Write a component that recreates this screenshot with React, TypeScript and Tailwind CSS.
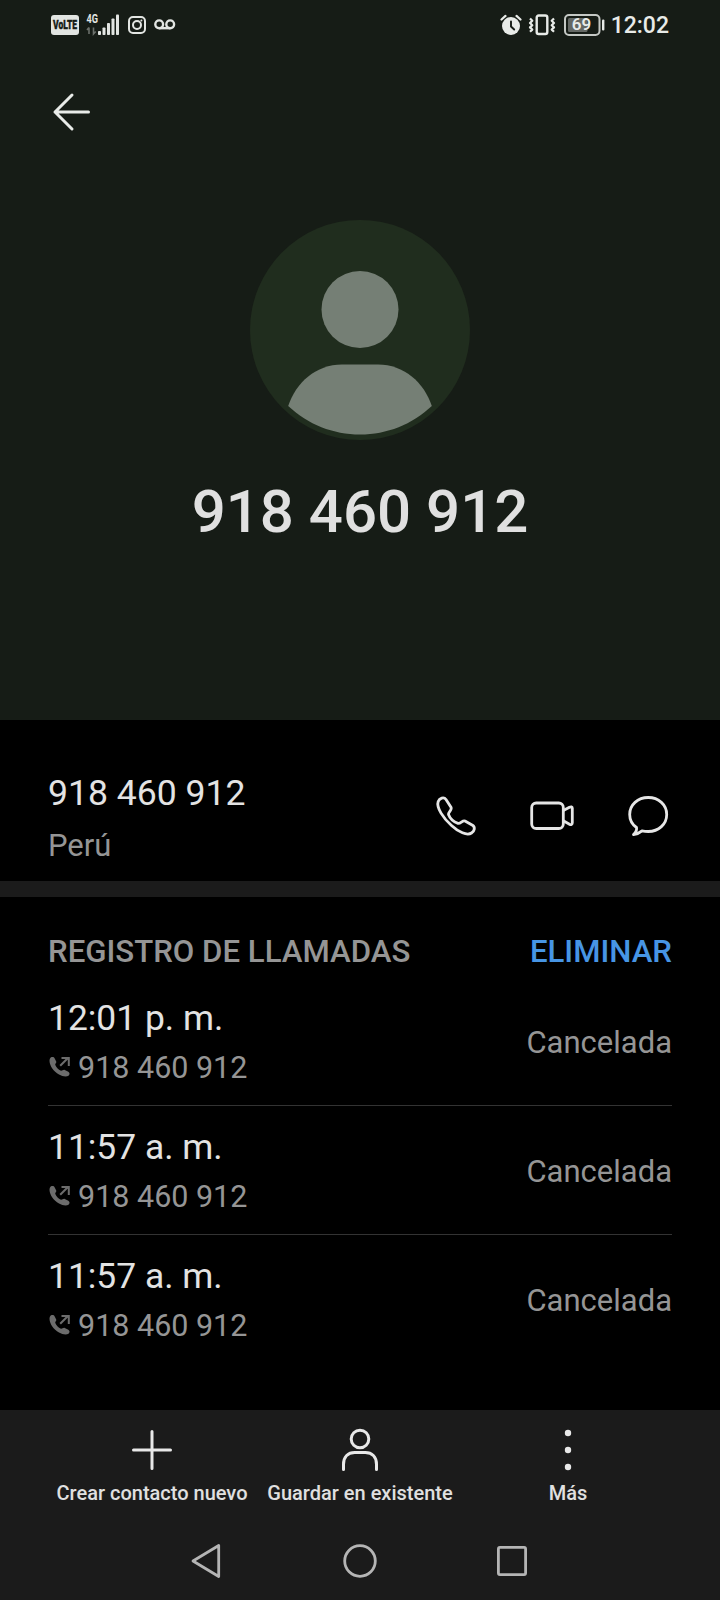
import type { ReactNode } from "react";

interface CallEntry {
  id: number;
  time: string;
  number: string;
  status: string;
}

const calls: CallEntry[] = [
  { id: 1, time: "12:01 p. m.", number: "918 460 912", status: "Cancelada" },
  { id: 2, time: "11:57 a. m.", number: "918 460 912", status: "Cancelada" },
  { id: 3, time: "11:57 a. m.", number: "918 460 912", status: "Cancelada" },
];

function SignalIcons() {
  return (
    <div className="flex items-center">
      <svg viewBox="0 0 28 20" className="h-5 w-7 overflow-visible" aria-label="VoLTE">
        <rect width="28" height="20" rx="3" fill="#e2e5e2" />
        <text x="2" y="14.4" textLength="24" lengthAdjust="spacingAndGlyphs" fontSize="12.5" fontWeight="900" fill="#161c16" stroke="#161c16" strokeWidth="0.4">
          VoLTE
        </text>
      </svg>
      <svg viewBox="0 0 34 24" className="ml-[7px] h-6 w-[34px] overflow-visible" fill="#e2e5e2">
        <text x="0.5" y="10.2" textLength="11.5" lengthAdjust="spacingAndGlyphs" fontSize="13" fontWeight="700">
          4G
        </text>
        <path d="M3 14.5v6.5M1 17l2-2.5M7.5 14.5v6.5l2.2-2.5" fill="none" stroke="#6b706b" strokeWidth="1.6" />
        <rect x="12" y="18" width="3" height="4" rx="0.8" />
        <rect x="16.5" y="14.5" width="3" height="7.5" rx="0.8" />
        <rect x="21" y="10" width="3" height="12" rx="0.8" />
        <rect x="25.5" y="5.5" width="3" height="16.5" rx="0.8" />
        <rect x="30" y="1.5" width="3" height="20.5" rx="0.8" />
      </svg>
      <svg viewBox="0 0 18 18" className="ml-2 size-[18px]" fill="none" stroke="#e2e5e2" strokeWidth="2">
        <rect x="1" y="1" width="16" height="16" rx="4" />
        <circle cx="9" cy="9" r="4" />
        <circle cx="13.4" cy="4.6" r="1" fill="#e2e5e2" stroke="none" />
      </svg>
      <svg viewBox="0 0 22 12" className="ml-[8px] h-3 w-[22px]" fill="none" stroke="#e2e5e2" strokeWidth="2.4">
        <circle cx="5.2" cy="5.3" r="3.9" />
        <circle cx="16.2" cy="5.3" r="3.9" />
        <path d="M5.2 9.2h11" />
      </svg>
    </div>
  );
}

function StatusBar() {
  return (
    <div className="flex h-[49px] items-center justify-between pr-[51px] pl-[51px] text-[#e8ebe8]">
      <SignalIcons />
      <div className="flex items-center">
        <svg viewBox="0 0 22 22" className="size-[22px]" fill="none" strokeLinecap="round">
          <circle cx="11" cy="12" r="9" fill="#e8ebe8" />
          <path d="M1.5 5.5l4-3.6M20.5 5.5l-4-3.6" stroke="#e8ebe8" strokeWidth="2.2" />
          <path d="M11 7.5v5l3.2 3" stroke="#161c16" strokeWidth="1.9" />
        </svg>
        <svg viewBox="0 0 28 22" className="ml-[6px] h-[22px] w-7" fill="none" stroke="#e8ebe8" strokeWidth="2.2">
          <rect x="8.7" y="1.5" width="10.6" height="18.5" rx="2" strokeWidth="2.4" />
          <path d="M2 4.5l2.3 2.3L2 9l2.3 2.2L2 13.4l2.3 2.2L2 17.8M26 4.5l-2.3 2.3L26 9l-2.3 2.2 2.3 2.2-2.3 2.2 2.3 2.2" strokeLinejoin="round" />
        </svg>
        <svg viewBox="0 0 41 22" className="ml-[8px] h-[22px] w-[41px]">
          <rect x="1" y="1" width="34.5" height="20" rx="4" fill="none" stroke="#c4c8c4" strokeWidth="2" />
          <rect x="4" y="4" width="19.5" height="14" rx="1.5" fill="#646864" />
          <rect x="38" y="5.5" width="2.4" height="11" rx="1" fill="#e8ebe8" />
          <text x="17.5" y="16" textAnchor="middle" fontSize="17" fontWeight="600" fill="#e8ebe8">
            69
          </text>
        </svg>
        <span className="ml-[6px] pt-0.5 text-[23px] leading-[30px] font-medium">12:02</span>
      </div>
    </div>
  );
}

function Avatar() {
  return (
    <svg viewBox="0 0 220 220" className="size-[220px]">
      <circle cx="110" cy="110" r="110" fill="#202d1e" />
      <g fill="#757f75">
        <circle cx="110" cy="89.5" r="38.5" />
        <path d="M92 144.5h36c26 0 46 18 53.8 41.5C162 204.5 137 214.5 110 214.5S58 204.5 38.2 186C46 162.5 66 144.5 92 144.5z" />
      </g>
    </svg>
  );
}

function OutgoingCallIcon() {
  return (
    <svg viewBox="0 1 22 22" className="size-[22px]" fill="#6c6c6c">
      <path d="M3 1.3C4.5.3 6 1 6.7 2.5L8.2 5.5C8.7 6.7 7.3 7.5 7.2 8.7 8 11.2 10.3 13.5 13 14.8 14.3 15 15.3 13.3 16.8 14L20.3 15.800C22 16.8 21.8 18.7 20.5 19.8 18.3 21.3 14.5 20.6 11 18.6 5.5 15.3 1.8 10 1.5 5 1.5 3.5 2 2 3 1.3z" />
      <path d="M12.2 9.8l8-8M13.5 2h7.3v8" fill="none" stroke="#6c6c6c" strokeWidth="2" />
    </svg>
  );
}

function CallRow({ call }: { call: CallEntry }) {
  return (
    <li className="flex h-[129px] items-center justify-between border-b border-[#333333] last:border-transparent">
      <div className="pt-px">
        <p className="text-[35.4px] leading-[44px] text-[#e3e3e3]">{call.time}</p>
        <div className="mt-[8px] flex items-center gap-2 text-[30.5px] leading-10 text-[#959595]">
          <OutgoingCallIcon />
          <span>{call.number}</span>
        </div>
      </div>
      <span className="pt-[3px] text-[31px] leading-10 text-[#959595]">{call.status}</span>
    </li>
  );
}

function ToolbarButton({ label, children }: { label: string; children: ReactNode }) {
  return (
    <button type="button" className="flex w-[208px] flex-col items-center whitespace-nowrap">
      <svg viewBox="0 0 44 44" className="size-11" fill="none" stroke="#e8e8e8" strokeWidth="3" strokeLinecap="round">
        {children}
      </svg>
      <span className="mt-[9px] text-[20px] leading-6 font-medium text-[#e0e0e0]">{label}</span>
    </button>
  );
}

export default function App() {
  return (
    <main className="flex h-[1600px] w-[720px] flex-col overflow-hidden bg-black font-['Roboto',sans-serif]">
      <header className="flex h-[720px] flex-col bg-[#161c16]">
        <StatusBar />
        <button type="button" aria-label="Atrás" className="mt-[43px] ml-[52px] size-10">
          <svg viewBox="0 0 40 40" className="size-10" fill="none" stroke="#e8ebe8" strokeWidth="3" strokeLinecap="round" strokeLinejoin="round">
            <path d="M36.5 20H3M20 3L3 20l17 17" />
          </svg>
        </button>
        <div className="mt-[88px] flex flex-col items-center">
          <Avatar />
          <h1 className="mt-9 text-[60px] leading-[72px] font-medium text-[#e0e0e0]">918 460 912</h1>
        </div>
      </header>

      <section className="flex h-[161px] items-start justify-between pt-[51px] pr-[50px] pl-12">
        <div>
          <p className="text-[35.6px] leading-[44px] text-[#e3e3e3]">918 460 912</p>
          <p className="mt-[11px] text-[31px] leading-10 text-[#959595]">Perú</p>
        </div>
        <div className="mt-[23px] flex items-center gap-[52px] text-[#e6e6e6]">
          <svg viewBox="0 0 44 44" className="size-11" fill="none" stroke="currentColor" strokeWidth="2.8" strokeLinejoin="round">
            <path d="M4.2 7.5C5.5 4.2 9.8 2.5 12 5.5L17 13.3C18.5 16 14 18 14.5 20.5 16 24.5 20 28 24 29.3 26.5 30 28.5 26 31 27L38.5 31.2C41.5 33.3 40.5 37 37.5 39 33 42 24.5 38 17.5 31.5 9.5 24.5 2 13.5 4.2 7.5z" />
          </svg>
          <svg viewBox="0 0 44 44" className="size-11" fill="none" stroke="currentColor" strokeWidth="2.8" strokeLinejoin="round">
            <rect x="1.7" y="9" width="31.6" height="25.5" rx="4.5" />
            <path d="M33.3 16.5l6.2-3.3c1.5-.7 2.8-.5 2.8 1v14.5c0 1.8-1.3 2.3-2.8 1.5l-6.2-3.5" />
          </svg>
          <svg viewBox="0 0 44 44" className="size-11" fill="none" stroke="currentColor" strokeWidth="2.8" strokeLinejoin="round">
            <path d="M22.2 3.500c10.500 0 18.500 7.300 18.500 17s-8 17-18.500 17c-2.200 0-4.300-.2-6.200-.6-1.800 1.600-4.500 3-8.500 3.600 2.500-2.200 3.500-4.800 3-7C6.200 30.500 3.700 25.900 3.700 20.500c0-9.700 8-17 18.500-17z" />
          </svg>
        </div>
      </section>

      <div className="h-4 bg-[#1b1b1b]" />

      <section className="h-[513px] px-12 pt-[35px]">
        <div className="flex items-center justify-between text-[31.2px] leading-10 font-medium">
          <h2 className="text-[#959595]">REGISTRO DE LLAMADAS</h2>
          <button type="button" className="text-[#4795e4]">ELIMINAR</button>
        </div>
        <ul className="mt-[5px]">
          {calls.map((call) => (
            <CallRow key={call.id} call={call} />
          ))}
        </ul>
      </section>

      <footer className="h-[190px] bg-[#1b1b1b] px-12 pt-[18px]">
        <div className="flex">
          <ToolbarButton label="Crear contacto nuevo">
            <path d="M22 3.5v37M3.5 22h37" />
          </ToolbarButton>
          <ToolbarButton label="Guardar en existente">
            <circle cx="22" cy="11" r="8.8" />
            <path d="M5.5 41.5v-5c0-8 4.7-12 11.2-12h10.6c6.5 0 11.2 4 11.2 12v5" />
          </ToolbarButton>
          <ToolbarButton label="Más">
            <g fill="#e8e8e8" stroke="none">
              <circle cx="22" cy="5" r="3.2" />
              <circle cx="22" cy="22" r="3.2" />
              <circle cx="22" cy="39" r="3.2" />
            </g>
          </ToolbarButton>
        </div>
        <nav className="mt-[38px] flex justify-center gap-[116px] text-[#b5b5b5]">
          <svg viewBox="0 0 36 36" className="size-9" fill="none" stroke="currentColor" strokeWidth="2.8" strokeLinejoin="round">
            <path d="M28.7 2.5v31L3 18z" />
          </svg>
          <svg viewBox="0 0 36 36" className="size-9" fill="none" stroke="currentColor" strokeWidth="2.8">
            <circle cx="18" cy="18" r="15.3" />
          </svg>
          <svg viewBox="0 0 36 36" className="size-9" fill="none" stroke="currentColor" strokeWidth="2.8">
            <rect x="4.4" y="4.4" width="27.2" height="27.2" rx="1.5" />
          </svg>
        </nav>
      </footer>
    </main>
  );
}
